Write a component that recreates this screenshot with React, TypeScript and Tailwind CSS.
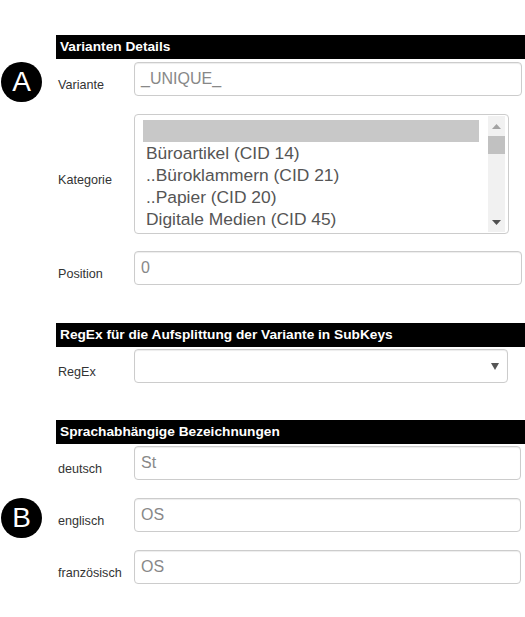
import React from 'react'

const font = { fontFamily: '"Liberation Sans", Arial, sans-serif' }

function Badge({ letter }: { letter: string }) {
  return (
    <div className="w-[41px] h-[40px] rounded-full bg-black text-white flex items-center justify-center text-[28px] leading-none">
      {letter}
    </div>
  )
}

function SectionHeader({ title }: { title: string }) {
  return (
    <div className="ml-[56px] h-[24px] bg-black text-white font-bold text-[13.7px] leading-[24px] pl-[4px]">
      {title}
    </div>
  )
}

function Row({
  label,
  badge,
  children,
  className = ''
}: {
  label: string
  badge?: string
  children: React.ReactNode
  className?: string
}) {
  return (
    <div className={`flex items-stretch ${className}`}>
      <div className="w-[56px] shrink-0 pl-[1px] self-start">
        {badge && (
          <div className="-mb-[6px]">
            <Badge letter={badge} />
          </div>
        )}
      </div>
      <div className="w-[78px] shrink-0 flex items-center">
        <span className="mt-[12px] pl-[2px] text-[12.6px] leading-[16px] text-[#333]">{label}</span>
      </div>
      {children}
    </div>
  )
}

function TextInput({ value, wide = false }: { value: string; wide?: boolean }) {
  return (
    <div
      className={`flex-1 h-[34px] border border-[#ccc] rounded-[4px] shadow-[inset_0_1px_1px_rgba(0,0,0,0.075)] bg-white pl-[6px] flex items-center text-[16px] text-[#888] ${
        wide ? 'mr-[4px]' : 'mr-[3px]'
      }`}
    >
      {value}
    </div>
  )
}

export default function App() {
  const categories = [
    '',
    'Büroartikel (CID 14)',
    '..Büroklammern (CID 21)',
    '..Papier (CID 20)',
    'Digitale Medien (CID 45)'
  ]

  return (
    <div className="w-[525px] h-[617px] bg-white pt-[35px]" style={font}>
      <SectionHeader title="Varianten Details" />

      <Row label="Variante" badge="A" className="mt-[3px]">
        <TextInput value="_UNIQUE_" />
      </Row>

      <Row label="Kategorie" className="mt-[18px]">
        <div className="flex-1 mr-[16px] h-[120px] border border-[#ccc] rounded-[4px] bg-white flex overflow-hidden">
          <div className="flex-1 pl-[8px] pr-[9px] pt-[5px]">
            {categories.map((c, i) => (
              <div
                key={i}
                className={`h-[22px] leading-[22px] text-[17.4px] text-[#555] pl-[3px] whitespace-nowrap ${
                  i === 0 ? 'bg-[#c8c8c8]' : ''
                }`}
              >
                {c}
              </div>
            ))}
          </div>
          <div className="w-[17px] my-[1px] mr-[3px] bg-[#f1f1f1] flex flex-col items-center">
            <div className="h-[20px] flex items-center justify-center">
              <svg width="9" height="5" viewBox="0 0 9 5">
                <path d="M0 5 L4.5 0 L9 5 Z" fill="#a3a3a3" />
              </svg>
            </div>
            <div className="w-[17px] h-[18px] bg-[#c1c1c1]" />
            <div className="flex-1" />
            <div className="h-[20px] flex items-center justify-center">
              <svg width="9" height="5" viewBox="0 0 9 5">
                <path d="M0 0 L9 0 L4.5 5 Z" fill="#505050" />
              </svg>
            </div>
          </div>
        </div>
      </Row>

      <Row label="Position" className="mt-[17px]">
        <TextInput value="0" />
      </Row>

      <div className="mt-[38px]">
        <SectionHeader title="RegEx für die Aufsplittung der Variante in SubKeys" />
      </div>

      <Row label="RegEx" className="mt-[2px]">
        <div className="flex-1 mr-[17px] h-[34px] border border-[#ccc] rounded-[4px] shadow-[inset_0_1px_1px_rgba(0,0,0,0.075)] bg-white flex items-center justify-end pr-[8px]">
          <svg width="8" height="8" viewBox="0 0 8 8">
            <path d="M0 1 L8 1 L4 8 Z" fill="#555" />
          </svg>
        </div>
      </Row>

      <div className="mt-[37px]">
        <SectionHeader title="Sprachabhängige Bezeichnungen" />
      </div>

      <Row label="deutsch" className="mt-[2px]">
        <TextInput value="St" wide />
      </Row>
      <Row label="englisch" badge="B" className="mt-[18px]">
        <TextInput value="OS" wide />
      </Row>
      <Row label="französisch" className="mt-[18px]">
        <TextInput value="OS" wide />
      </Row>
    </div>
  )
}
